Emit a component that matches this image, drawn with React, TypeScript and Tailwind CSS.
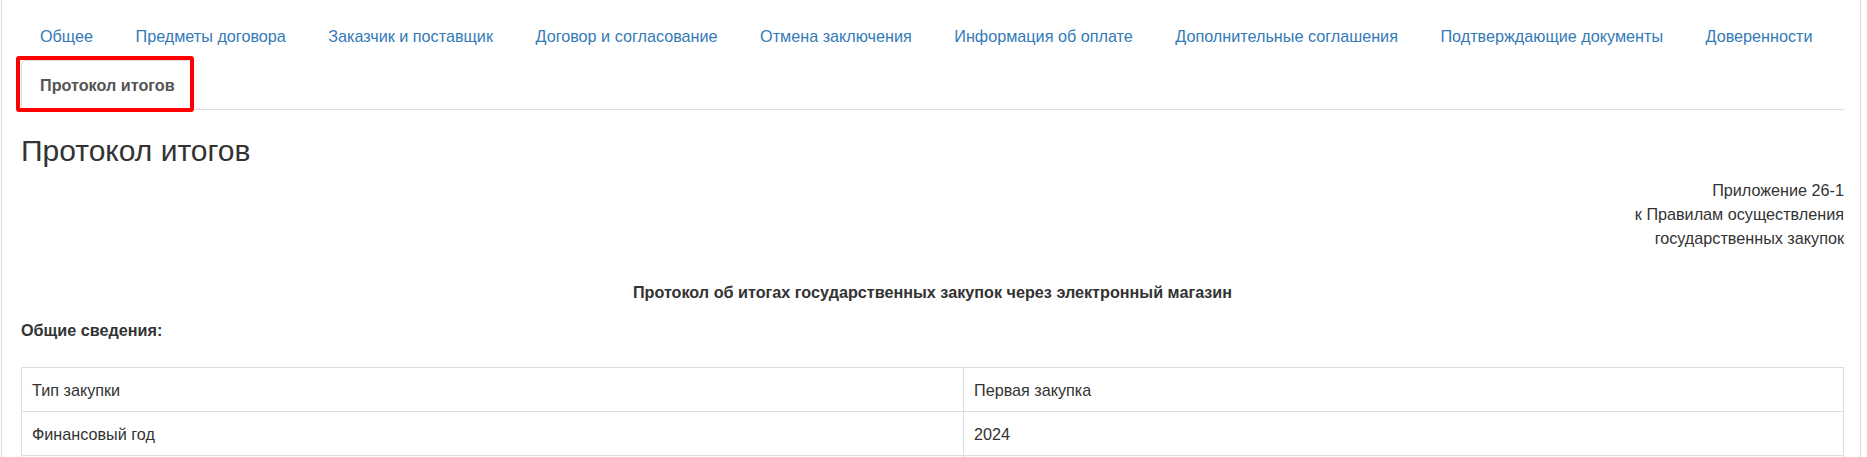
import React from 'react';

const tabs = [
  'Общее',
  'Предметы договора',
  'Заказчик и поставщик',
  'Договор и согласование',
  'Отмена заключения',
  'Информация об оплате',
  'Дополнительные соглашения',
  'Подтверждающие документы',
  'Доверенности',
];

const rows = [
  ['Тип закупки', 'Первая закупка'],
  ['Финансовый год', '2024'],
  ['\u00a0', '\u00a0'],
];

export default function App() {
  return (
    <div className="ml-px w-[1860px] min-h-[457px] border-x border-[#ddd] bg-white pl-[19px] pr-[16px] pt-[11px] font-['Liberation_Sans',Arial,sans-serif] text-[16.2px] leading-[24px] text-[#333]">
      <ul className="flex flex-wrap border-b border-[#ddd]">
        {tabs.map((t) => (
          <li key={t} className="-mb-px">
            <a className="mr-[4.5px] block rounded-t-[5px] border border-transparent px-[18px] py-[12px] text-[#337ab7]">
              {t}
            </a>
          </li>
        ))}
        <li className="relative -mb-px">
          <a className="mr-[4.5px] block rounded-t-[5px] border border-[#ddd] border-b-transparent bg-white px-[18px] py-[12px] font-bold text-[#555]">
            Протокол итогов
          </a>
          <span className="pointer-events-none absolute left-[-5px] top-[-4px] h-[56px] w-[178px] rounded-[3px] border-[4px] border-[#ff0000]" />
        </li>
      </ul>

      <h3 className="mb-[10px] mt-[24px] text-[30px] leading-[34px] text-[#333]">Протокол итогов</h3>

      <div className="text-right">
        <div>Приложение 26-1</div>
        <div>к Правилам осуществления</div>
        <div>государственных закупок</div>
      </div>

      <p className="mt-[30px] text-center font-bold">
        Протокол об итогах государственных закупок через электронный магазин
      </p>

      <p className="mt-[14px] font-bold">Общие сведения:</p>

      <table className="mt-[25px] w-full table-fixed border-collapse">
        <colgroup>
          <col className="w-[942px]" />
          <col />
        </colgroup>
        <tbody>
          {rows.map((r, i) => (
            <tr key={i}>
              <td className="border border-[#ddd] px-[10px] pb-[9px] pt-[10px]">{r[0]}</td>
              <td className="border border-[#ddd] px-[10px] pb-[9px] pt-[10px]">{r[1]}</td>
            </tr>
          ))}
        </tbody>
      </table>
    </div>
  );
}
